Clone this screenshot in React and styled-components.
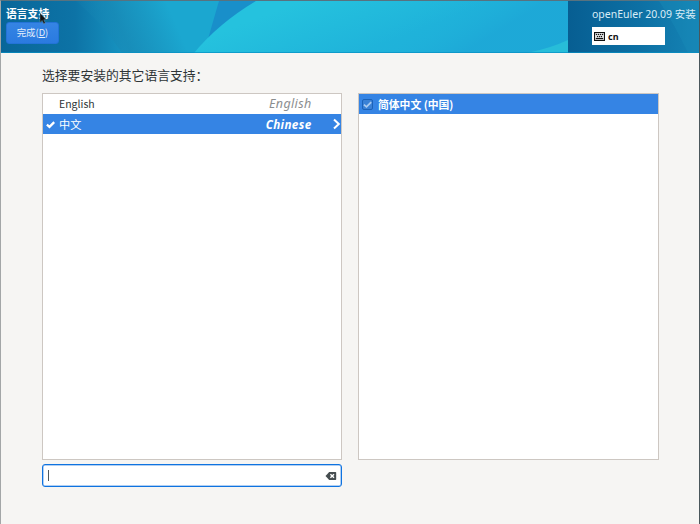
import React from "react";
import styled, { createGlobalStyle, css } from "styled-components";

const GlobalStyle = createGlobalStyle`
  *, *::before, *::after { box-sizing: border-box; }
  body { margin: 0; background: #f6f5f4; }
`;

const Window = styled.div`
  width: 700px;
  height: 524px;
  display: flex;
  flex-direction: column;
  overflow: hidden;
  background: #f6f5f3;
  border-top: 1px solid #58727f;
  border-left: 1px solid #a3a6a7;
  border-right: 1px solid #4a565b;
  color: #2e3436;
  font-family: "Noto Sans", "Noto Sans CJK SC", sans-serif;
  font-size: 12px;
  white-space: nowrap;
`;

const Header = styled.header`
  display: grid;
  flex: none;
  height: 52px;
  > * { grid-area: 1 / 1; }
`;

const Artwork = styled.svg`
  display: block;
  width: 698px;
  height: 52px;
`;

const HeaderContent = styled.div`
  z-index: 1;
  display: flex;
  justify-content: space-between;
  padding: 5px 3px 0 5px;
`;

const TitleGroup = styled.div`
  position: relative;
  display: flex;
  flex-direction: column;
`;

const Title = styled.h1`
  margin: 0;
  height: 16px;
  font-size: 10.8px;
  line-height: 16px;
  font-weight: 700;
  color: #fff;
`;

const DoneButton = styled.button`
  width: 53px;
  height: 22px;
  padding: 0 0 1px;
  border: 1px solid #2373d7;
  border-radius: 3px;
  background: linear-gradient(#3584e4, #2a7ae0);
  color: #e4effc;
  font: 9.4px/19px "Noto Sans CJK SC", sans-serif;
`;

const Pointer = styled.svg`
  position: absolute;
  left: 33px;
  top: 6px;
  width: 8px;
  height: 13px;
`;

const ProductGroup = styled.div`
  width: 104px;
  display: flex;
  flex-direction: column;
  gap: 5px;
`;

const Product = styled.div`
  height: 16px;
  font-size: 10.5px;
  line-height: 16px;
  color: #d9edf7;
`;

const KeyboardLayout = styled.div`
  display: flex;
  align-items: center;
  gap: 3px;
  width: 73px;
  height: 18px;
  padding-left: 2px;
  background: #fff;
  color: #111;
  font-size: 9px;
  font-weight: 700;
  svg { display: block; }
`;

const Content = styled.main`
  display: flex;
  flex-direction: column;
  padding: 13px 40px 0 41px;
`;

const Prompt = styled.div`
  height: 27px;
  font-size: 12.8px;
  line-height: 18px;
`;

const Panels = styled.div`
  display: grid;
  grid-template-columns: 300px 301px;
  column-gap: 16px;
`;

const LanguageColumn = styled.div`
  display: flex;
  flex-direction: column;
  gap: 4px;
`;

const List = styled.div`
  height: 367px;
  border: 1px solid #cdc7c2;
  background: #fff;
`;

const Row = styled.div`
  display: flex;
  align-items: center;
  height: 20px;
  line-height: 20px;
  color: #2e3436;
  ${(p) => p.$selected && css`
    background: #3584e4;
    color: #fff;
  `}
`;

const MarkSlot = styled.span`
  width: 16px;
  display: flex;
  padding-left: 3px;
`;

const NativeName = styled.span`
  flex: 1;
  font-family: "Noto Sans CJK SC", sans-serif;
  font-size: ${(p) => (p.$selected ? "11.2px" : "10.5px")};
`;

const EnglishName = styled.span`
  font-style: italic;
  font-weight: ${(p) => (p.$selected ? 700 : 400)};
  font-size: ${(p) => (p.$selected ? "11.7px" : "12.5px")};
  letter-spacing: .35px;
  color: ${(p) => (p.$selected ? "#fff" : "#8b8e8f")};
`;

const ArrowSlot = styled.span`
  display: flex;
  justify-content: flex-end;
  width: 29.5px;
`;

const Checkbox = styled.span`
  display: flex;
  align-items: center;
  justify-content: center;
  width: 11px;
  height: 11px;
  margin: 0 5px 0 3px;
  border: 1px solid #1b62b8;
  border-radius: 2px;
  background: #3981d6;
`;

const LocaleName = styled.span`
  font-family: "Noto Sans CJK SC", sans-serif;
  font-size: 10.8px;
  font-weight: 700;
`;

const SearchField = styled.div`
  display: flex;
  align-items: center;
  justify-content: space-between;
  height: 23px;
  padding: 0 4px;
  border: 1px solid #0f73e0;
  border-radius: 3px;
  background: #fff;
  box-shadow: inset 0 0 0 0.5px #62a0e8;
`;

const Caret = styled.span`
  width: 1px;
  height: 11px;
  margin-left: 1px;
  background: #50585b;
`;

function HeaderArtwork() {
  return (
    <Artwork viewBox="0 0 698 52" preserveAspectRatio="none" aria-hidden="true">
      <defs>
        <linearGradient id="sea" x1="0" x2="567" gradientUnits="userSpaceOnUse">
          <stop offset="0" stopColor="#086699" />
          <stop offset=".13" stopColor="#0d73a6" />
          <stop offset=".22" stopColor="#1795c2" />
          <stop offset=".31" stopColor="#1ba4cf" />
          <stop offset=".38" stopColor="#1ca6d5" />
        </linearGradient>
        <linearGradient id="wave" x1="300" y1="0" x2="325" y2="65" gradientUnits="userSpaceOnUse">
          <stop offset="0" stopColor="#25c2de" />
          <stop offset="1" stopColor="#1fb3da" />
        </linearGradient>
        <linearGradient id="corner" x1="567" x2="698" gradientUnits="userSpaceOnUse">
          <stop offset="0" stopColor="#075e92" />
          <stop offset=".55" stopColor="#0d70a4" />
          <stop offset="1" stopColor="#1584b5" />
        </linearGradient>
        <linearGradient id="beam" x1="85" y1="35" x2="165" y2="0" gradientUnits="userSpaceOnUse">
          <stop offset="0" stopColor="#1685b3" stopOpacity="0" />
          <stop offset=".4" stopColor="#188ab6" stopOpacity=".7" />
          <stop offset="1" stopColor="#1ba7d0" />
        </linearGradient>
        <linearGradient id="deep" x1="430" y1="0" x2="462" y2="52" gradientUnits="userSpaceOnUse">
          <stop offset="0" stopColor="#20b4db" stopOpacity="0" />
          <stop offset="1" stopColor="#1da5d6" />
        </linearGradient>
      </defs>
      <rect width="698" height="52" fill="url(#sea)" />
      <path d="M75 0H218L206 52H121Q101 22 75 0Z" fill="url(#beam)" />
      <path d="M218 0H258L207 38Z" fill="#198fca" />
      <path d="M255 0H567V52H193Q218 22 255 0Z" fill="url(#wave)" />
      <path d="M370 0H567V52H370Z" fill="url(#deep)" opacity=".75" />
      <path d="M526 52Q550 47 567 39V52Z" fill="#27bdd9" />
      <rect x="567" width="131" height="52" fill="url(#corner)" />
      <path d="M658 0H698V52H687Q674 24 658 0Z" fill="#188bb9" opacity=".4" />
      <rect y="51" width="698" height="1" fill="#0790c3" opacity=".7" />
    </Artwork>
  );
}

function KeyboardIcon() {
  return (
    <svg width="11" height="9" viewBox="0 0 11 9" aria-hidden="true">
      <rect x=".5" y=".5" width="10" height="8" fill="#fff" stroke="#111" strokeWidth="1.3" />
      <path d="M2 2h1v1H2zM4 2h1v1H4zM6 2h1v1H6zM8 2h1v1H8zM3 4h1v1H3zM5 4h1v1H5zM7 4h1v1H7zM2 6h7v1H2z" fill="#111" stroke="#111" strokeWidth=".35" />
    </svg>
  );
}

function CheckMark({ color = "#fff", weight = 2 }) {
  return (
    <svg width="9" height="9" viewBox="0 0 8 8" aria-hidden="true">
      <path d="M.8 4.1 3.1 6.1 7.3 1.9" fill="none" stroke={color} strokeWidth={weight} />
    </svg>
  );
}

function ArrowIcon() {
  return (
    <svg width="9" height="12" viewBox="0 0 9 12" aria-hidden="true">
      <path d="M2 1.5 6.8 6 2 10.5" fill="none" stroke="#fff" strokeWidth="2" />
    </svg>
  );
}

function ClearIcon() {
  return (
    <svg width="12" height="10" viewBox="0 0 12 10" aria-hidden="true">
      <path d="M4.2 1H10.5Q11.2 1 11.2 1.7V8.2Q11.2 9 10.5 9H4.2L.5 5Z" fill="#464d50" />
      <path d="m5.4 3.2 3.6 3.6m0-3.6L5.4 6.8" stroke="#fff" strokeWidth="1.4" />
    </svg>
  );
}

const languages = [
  { native: "English", english: "English", selected: false },
  { native: "中文", english: "Chinese", selected: true },
];

export default function App() {
  return (
    <>
      <GlobalStyle />
      <Window>
        <Header>
          <HeaderArtwork />
          <HeaderContent>
            <TitleGroup>
              <Title>语言支持</Title>
              <DoneButton>完成(<u>D</u>)</DoneButton>
              <Pointer viewBox="0 0 8 13" aria-hidden="true">
                <path d="M1 1V10.5L3.2 8.4 4.7 11.8 6.3 11.1 4.8 7.8H7.3Z" fill="#111" stroke="#7191a2" strokeWidth=".5" />
              </Pointer>
            </TitleGroup>
            <ProductGroup>
              <Product>openEuler 20.09 安装</Product>
              <KeyboardLayout><KeyboardIcon />cn</KeyboardLayout>
            </ProductGroup>
          </HeaderContent>
        </Header>
        <Content>
          <Prompt>选择要安装的其它语言支持：</Prompt>
          <Panels>
            <LanguageColumn>
              <List>
                {languages.map((l) => (
                  <Row key={l.native} $selected={l.selected}>
                    <MarkSlot>{l.selected && <CheckMark />}</MarkSlot>
                    <NativeName $selected={l.selected}>{l.native}</NativeName>
                    <EnglishName $selected={l.selected}>{l.english}</EnglishName>
                    <ArrowSlot>{l.selected && <ArrowIcon />}</ArrowSlot>
                  </Row>
                ))}
              </List>
              <SearchField><Caret /><ClearIcon /></SearchField>
            </LanguageColumn>
            <List>
              <Row $selected>
                <Checkbox><CheckMark color="#a9caef" weight={1.6} /></Checkbox>
                <LocaleName>简体中文 (中国)</LocaleName>
              </Row>
            </List>
          </Panels>
        </Content>
      </Window>
    </>
  );
}
